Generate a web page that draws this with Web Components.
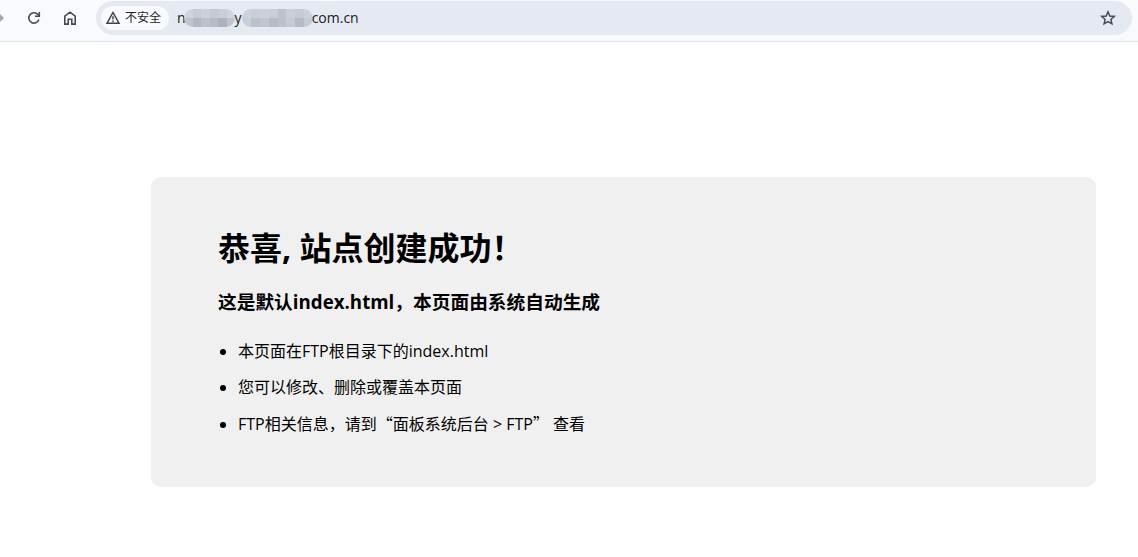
<!DOCTYPE html>
<html lang="zh-CN">
<head>
<meta charset="utf-8">
<title>恭喜，站点创建成功！</title>
<style>
body { margin: 0; background: #fff; color: #000; font: 16px/24px "Open Sans", "Noto Sans CJK SC", sans-serif; }
</style>
</head>
<body>
<browser-bar></browser-bar>
<welcome-card>
  <span slot="title">恭喜, 站点创建成功！</span>
  <span slot="subtitle">这是默认index.html，本页面由系统自动生成</span>
  <welcome-list></welcome-list>
</welcome-card>
<script>
const define = (name, html) => customElements.define(name, class extends HTMLElement {
  constructor() {
    super();
    this.attachShadow({ mode: "open" }).innerHTML = html;
  }
});

customElements.define("pixel-mask", class extends HTMLElement {
  connectedCallback() {
    const rows = this.getAttribute("rows").split("|").map(r => r.split(" "));
    const w = rows[0].length * 9;
    const cells = rows.map((r, y) => r.map((c, x) =>
      `<rect x="${x * 9}" y="${y * 9}" width="9" height="9" fill="#${c}"/>`).join("")).join("");
    this.attachShadow({ mode: "open" }).innerHTML = `
      <style>:host { display: block; height: 18px; border-radius: 9px; overflow: hidden; } svg { display: block; width: 100%; height: 100%; }</style>
      <svg viewBox="0 0 ${w} 18" preserveAspectRatio="none" shape-rendering="crispEdges" aria-hidden="true">${cells}</svg>`;
  }
});

define("security-chip", `
  <style>
    :host { display: block; }
    button { display: flex; align-items: center; gap: 4px; height: 24px; padding: 0 8px 0 4px; border: 0; border-radius: 12px; background: #f8faff; color: #1f1f1f; font: 12px/24px "Open Sans", "Noto Sans CJK SC", sans-serif; }
  </style>
  <button type="button">
    <svg width="16" height="16" viewBox="0 0 16 16" fill="none" stroke="#3c4048" stroke-width="1.5" aria-hidden="true"><path d="M8 2.5 14 13.2H2Z"/><path d="M8 6.2v3.4M8 10.6v1.4"/></svg>
    <slot></slot>
  </button>`);

define("icon-button", `
  <style>
    :host { display: block; }
    button { display: grid; place-items: center; width: 20px; height: 20px; padding: 0; border: 0; background: none; color: #454a55; }
  </style>
  <button type="button"><slot></slot></button>`);

define("browser-bar", `
  <style>
    :host { display: block; }
    header { display: flex; align-items: flex-start; box-sizing: border-box; height: 42px; padding: 1px 6px 0 0; border-bottom: 1px solid #dde1e9; background: #f8faff; }
    nav { display: flex; align-items: center; height: 34px; width: 96px; }
    .forward { width: 24px; }
    .home { margin-left: 16px; }
    .address { flex: 1; display: flex; align-items: center; box-sizing: border-box; height: 34px; padding: 0 14px 0 5px; border-radius: 17px; background: #e5e9f2; }
    .url { flex: 1; display: flex; align-items: center; margin-left: 8px; color: #202124; font-size: 14px; line-height: 20px; }
    .short { width: 51px; margin-left: -2px; }
    .long { width: 71px; margin-right: -1px; }
    svg { display: block; }
  </style>
  <header>
    <nav aria-label="导航">
      <svg class="forward" width="24" height="20" viewBox="0 0 24 20" fill="#a5a8ae" aria-hidden="true"><path d="M0 6 4 10 0 14Z"/></svg>
      <icon-button aria-label="重新加载"><svg width="20" height="20" viewBox="0 0 20 20" fill="none" stroke="currentColor" stroke-width="1.6"><path d="M14.9 11.6A5.2 5.2 0 1 1 13.9 6.5L15 7.8"/><path d="M15.3 4v4.2H11"/></svg></icon-button>
      <icon-button class="home" aria-label="主页"><svg width="20" height="20" viewBox="0 0 20 20" fill="none" stroke="currentColor" stroke-width="1.6"><path d="M4.8 8.2 10 4.2l5.2 4v7.9h-3.4v-4.8H8.2v4.8H4.8Z"/></svg></icon-button>
    </nav>
    <div class="address">
      <security-chip>不安全</security-chip>
      <div class="url"><span>n</span><pixel-mask class="short" rows="ced3dd c6ccd6 cbd0da c4c9d3 c9ced8 d0d4de|bfc4ce b2b7c1 bcc2cc b7bcc6 adb2bc bfc4ce"></pixel-mask><span>y</span><pixel-mask class="long" rows="cdd2dc c9ced8 cbd0da c8cdd7 bdc3cd c9ced8 c6cbd5 ccd1db|c9ced8 bbc1cb c0c5cf b6bcc6 bcc1cb c5cad4 b5bac4 c4c9d3"></pixel-mask><span>com.cn</span></div>
      <icon-button aria-label="收藏"><svg width="20" height="20" viewBox="0 0 20 20" fill="none" stroke="currentColor" stroke-width="1.5"><path d="m10 3.8 1.8 4.2 4.5.4-3.4 3 1 4.4L10 13.5l-3.9 2.3 1-4.4-3.4-3 4.5-.4Z"/></svg></icon-button>
    </div>
  </header>`);

define("welcome-card", `
  <style>
    :host { display: block; margin: 135px 42px 48px 151px; }
    main { padding: 49px 67px 45px; border-radius: 10px; background: #f0f0f0; }
    h1 { margin: 0; font-size: 32px; line-height: 44px; }
    h3 { margin: 19px 0 0; line-height: 26px; }
  </style>
  <main>
    <h1><slot name="title"></slot></h1>
    <h3><slot name="subtitle"></slot></h3>
    <slot></slot>
  </main>`);

define("welcome-list", `
  <style>
    :host { display: block; margin-top: 18px; }
    ul { margin: 0; padding: 0 0 0 20px; line-height: 36px; }
    .quote { font-family: "Noto Sans CJK SC", sans-serif; }
  </style>
  <ul>
    <li>本页面在FTP根目录下的index.html</li>
    <li>您可以修改、删除或覆盖本页面</li>
    <li>FTP相关信息，请到<span class="quote">“</span>面板系统后台 &gt; FTP<span class="quote">”</span> 查看</li>
  </ul>`);
</script>
</body>
</html>
